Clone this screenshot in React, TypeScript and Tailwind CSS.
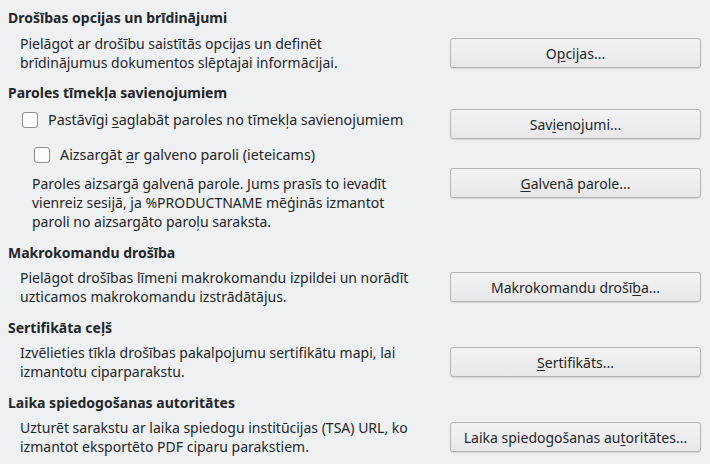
import React from "react";

const Btn = ({ children }: { children: React.ReactNode }) => (
  <button className="w-[251px] h-[30px] shrink-0 rounded-[3px] border border-[#b4b5b7] bg-gradient-to-b from-[#f3f3f4] to-[#e8e8ea] text-[14px] text-[#232629] shadow-[0_1px_1px_rgba(0,0,0,0.12)]">
    {children}
  </button>
);

const U = ({ children }: { children: React.ReactNode }) => (
  <span className="underline underline-offset-2">{children}</span>
);

const Heading = ({ children }: { children: React.ReactNode }) => (
  <h3 className="pl-2 font-bold text-[14px] leading-[19px]">{children}</h3>
);

const Check = ({ children }: { children: React.ReactNode }) => (
  <label className="flex items-center gap-[10px]">
    <span className="w-4 h-4 rounded-[3px] border border-[#8f9194] bg-[#fbfbfb]" />
    <span className="text-[14.3px]">{children}</span>
  </label>
);

const Row = ({ text, button }: { text: React.ReactNode; button: React.ReactNode }) => (
  <div className="flex items-center justify-between pl-5 pr-[9px]">
    <p>{text}</p>
    <Btn>{button}</Btn>
  </div>
);

export default function App() {
  return (
    <main
      className="w-[710px] h-[464px] bg-[#eff0f1] text-[#232629] text-[14px] leading-[19px] pt-[8px]"
      style={{ fontFamily: '"Noto Sans", "Open Sans", sans-serif' }}
    >
      <section className="flex flex-col gap-[7px]">
        <Heading>Drošības opcijas un brīdinājumi</Heading>
        <Row
          text={<>Pielāgot ar drošību saistītās opcijas un definēt<br />brīdinājumus dokumentos slēptajai informācijai.</>}
          button={<>O<U>p</U>cijas...</>}
        />
      </section>

      <section className="flex flex-col mt-[11px]">
        <Heading>Paroles tīmekļa savienojumiem</Heading>
        <div className="flex justify-between pl-[22px] pr-[9px] mt-[7px]">
          <div className="pt-[1px]">
            <Check>Pastāvīgi <U>s</U>aglabāt paroles no tīmekļa savienojumiem</Check>
          </div>
          <Btn>Sav<U>i</U>enojumi...</Btn>
        </div>
        <div className="pl-[34px] mt-[6px]">
          <Check>Aizsargāt <U>a</U>r galveno paroli (ieteicams)</Check>
        </div>
        <div className="flex justify-between pl-8 pr-[9px] mt-[4px]">
          <p className="pt-[6px]">
            Paroles aizsargā galvenā parole. Jums prasīs to ievadīt<br />
            vienreiz sesijā, ja %PRODUCTNAME mēģinās izmantot<br />
            paroli no aizsargāto paroļu saraksta.
          </p>
          <Btn><U>G</U>alvenā parole...</Btn>
        </div>
      </section>

      <section className="flex flex-col gap-[6px] mt-[12px]">
        <Heading>Makrokomandu drošība</Heading>
        <Row
          text={<>Pielāgot drošības līmeni makrokomandu izpildei un norādīt<br />uzticamos makrokomandu izstrādātājus.</>}
          button={<>Makrokomandu drošī<U>b</U>a...</>}
        />
      </section>

      <section className="flex flex-col gap-[6px] mt-[12px]">
        <Heading>Sertifikāta ceļš</Heading>
        <Row
          text={<>Izvēlieties tīkla drošības pakalpojumu sertifikātu mapi, lai<br />izmantotu ciparparakstu.</>}
          button={<><U>S</U>ertifikāts...</>}
        />
      </section>

      <section className="flex flex-col gap-[6px] mt-[12px]">
        <Heading>Laika spiedogošanas autoritātes</Heading>
        <Row
          text={<>Uzturēt sarakstu ar laika spiedogu institūcijas (TSA) URL, ko<br />izmantot eksportēto PDF ciparu parakstiem.</>}
          button={<>Laika spiedogošanas au<U>t</U>oritātes...</>}
        />
      </section>
    </main>
  );
}
